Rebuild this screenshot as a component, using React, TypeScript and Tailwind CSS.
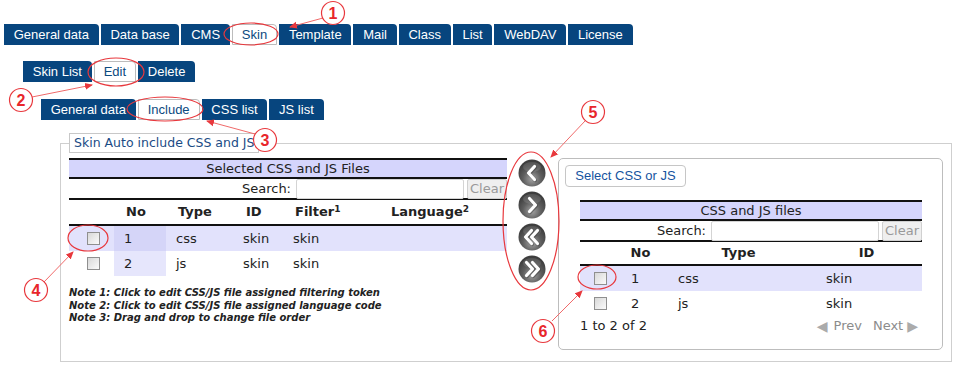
import React from 'react';

const TOP_TABS = ['General data', 'Data base', 'CMS', 'Skin', 'Template', 'Mail', 'Class', 'List', 'WebDAV', 'License'];
const EDIT_TABS = ['Skin List', 'Edit', 'Delete'];
const SUB_TABS = ['General data', 'Include', 'CSS list', 'JS list'];

const VERDANA = "font-['DejaVu_Sans',Verdana,sans-serif]";

function Tab({ label, active }: { label: string; active?: boolean }) {
  return (
    <div
      className={
        active
          ? 'h-[21px] rounded-tr-[4px] border border-[#bcbcbc] bg-white px-[9px] text-[13px] leading-[19px] text-[#0b4a80]'
          : 'h-[21px] rounded-tr-[4px] bg-[#07457e] px-[9.75px] text-[13px] leading-[21px] text-white'
      }
    >
      {label}
    </div>
  );
}

function TabRow({ tabs, active, className }: { tabs: string[]; active: string; className: string }) {
  return (
    <div className={`flex gap-[2px] ${className}`}>
      {tabs.map((t) => (
        <Tab key={t} label={t} active={t === active} />
      ))}
    </div>
  );
}

function Checkbox() {
  return (
    <div className="h-[13px] w-[13px] border border-[#8f8f8f] bg-gradient-to-br from-[#d8d8d8] to-[#fbfbfb]" />
  );
}

function SearchRow() {
  return (
    <div className="flex h-[21px] items-center justify-end gap-[3px] border-b-2 border-[#111]">
      <span className="mr-[2px] text-[13px]">Search:</span>
      <div className="h-[20px] w-[168px] rounded-[2px] border border-[#d4d4d4] bg-white" />
      <div className="h-[20px] w-[40px] rounded-[2px] border border-[#d0d0d0] bg-[#efefef] text-center text-[13px] leading-[18px] text-[#999]">
        Clear
      </div>
    </div>
  );
}

function ArrowButton({ kind }: { kind: 'l' | 'r' | 'll' | 'rr' }) {
  const paths: Record<string, string> = {
    l: 'M16.5 7.5 L10.5 14 L16.5 20.5',
    r: 'M11.5 7.5 L17.5 14 L11.5 20.5',
    ll: 'M13.5 7.5 L7.5 14 L13.5 20.5 M19.5 7.5 L13.5 14 L19.5 20.5',
    rr: 'M8.5 7.5 L14.5 14 L8.5 20.5 M14.5 7.5 L20.5 14 L14.5 20.5',
  };
  return (
    <svg width="28" height="28" viewBox="0 0 28 28">
      <defs>
        <radialGradient id={`g-${kind}`} cx="50%" cy="72%" r="62%">
          <stop offset="0%" stopColor="#a4a4a4" />
          <stop offset="55%" stopColor="#5e5e5e" />
          <stop offset="100%" stopColor="#3e3e3e" />
        </radialGradient>
      </defs>
      <circle cx="14" cy="14" r="13.5" fill={`url(#g-${kind})`} />
      <ellipse cx="14" cy="8" rx="9" ry="5" fill="#ffffff" opacity="0.12" />
      <path d={paths[kind]} fill="none" stroke="#3a3a3a" strokeWidth="3.8" strokeLinecap="round" strokeLinejoin="round" opacity="0.5" transform="translate(0.6 0.8)" />
      <path d={paths[kind]} fill="none" stroke="#ffffff" strokeWidth="3.2" strokeLinecap="round" strokeLinejoin="round" />
    </svg>
  );
}

const LEFT_ROWS = [
  { no: '1', type: 'css', id: 'skin', filter: 'skin' },
  { no: '2', type: 'js', id: 'skin', filter: 'skin' },
];

function LeftTable() {
  const cols = 'grid grid-cols-[45px_52px_70px_48px_97px_1fr]';
  return (
    <div className="w-[438px]">
      <div className="h-[21px] border-y-2 border-[#111] bg-[#d5d5fc] text-center text-[13px] leading-[17px]">
        Selected CSS and JS Files
      </div>
      <SearchRow />
      <div className={`${cols} h-[26px] items-center border-b-2 border-[#111] text-[13px] font-bold`}>
        <div />
        <div className="pl-[12px]">No</div>
        <div className="pl-[12px]">Type</div>
        <div className="pl-[10px]">ID</div>
        <div className="pl-[11px]">
          Filter<sup className="text-[9px]">1</sup>
        </div>
        <div className="pl-[10px]">
          Language<sup className="text-[9px]">2</sup>
        </div>
      </div>
      {LEFT_ROWS.map((r, i) => (
        <div key={r.no} className={`${cols} h-[25px] items-center text-[13px] ${i === 0 ? 'bg-[#e2e2fc]' : 'bg-white'}`}>
          <div className="flex justify-center pl-[3px]">
            <Checkbox />
          </div>
          <div className={`flex h-full items-center pl-[10px] ${i === 0 ? 'bg-[#d5d5f8]' : 'bg-[#e6e6fc]'}`}>{r.no}</div>
          <div className="pl-[10px]">{r.type}</div>
          <div className="pl-[7px]">{r.id}</div>
          <div className="pl-[9px]">{r.filter}</div>
          <div />
        </div>
      ))}
      <div className="mt-[11px] text-[10px] font-bold italic leading-[12.5px]">
        <div>Note 1: Click to edit CSS/JS file assigned filtering token</div>
        <div>Note 2: Click to edit CSS/JS file assigned language code</div>
        <div>Note 3: Drag and drop to change file order</div>
      </div>
    </div>
  );
}

function RightPanel() {
  const cols = 'grid grid-cols-[41px_45px_145px_1fr]';
  return (
    <div className="ml-[12px] w-[385px] rounded-[5px] border border-[#bdbdbd] pb-[13px] pt-[6px]">
      <div className="ml-[6px] h-[22px] w-[121px] rounded-[4px] border border-[#c6c6c6] bg-white text-center font-['Liberation_Sans',Arial,sans-serif] text-[13px] leading-[20px] text-[#1553a0]">
        Select CSS or JS
      </div>
      <div className="ml-[21px] mr-[20px] mt-[13px]">
        <div className="h-[21px] border-y-2 border-[#111] bg-[#d5d5fc] text-center text-[13px] leading-[17px]">
          CSS and JS files
        </div>
        <SearchRow />
        <div className={`${cols} h-[24px] items-center border-b-2 border-[#111] text-center text-[13px] font-bold`}>
          <div />
          <div className="pr-[6px]">No</div>
          <div>Type</div>
          <div>ID</div>
        </div>
        {LEFT_ROWS.map((r, i) => (
          <div key={r.no} className={`${cols} h-[25px] items-center text-[13px] ${i === 0 ? 'bg-[#e2e2fc]' : 'bg-white'}`}>
            <div className="flex justify-center">
              <Checkbox />
            </div>
            <div className="pl-[10px]">{r.no}</div>
            <div className="pl-[12px]">{r.type}</div>
            <div className="pl-[15px]">{r.id}</div>
          </div>
        ))}
        <div className="flex h-[20px] items-center justify-between text-[13px]">
          <span>1 to 2 of 2</span>
          <span className="flex items-center pr-[4px] text-[#8c8c8c]">
            <span className="mr-[6px] text-[14px] leading-[14px] text-[#ababab]">◀</span>
            <span>Prev</span>
            <span className="ml-[11px]">Next</span>
            <span className="ml-[4px] text-[14px] leading-[14px] text-[#ababab]">▶</span>
          </span>
        </div>
      </div>
    </div>
  );
}

function Annotations() {
  const red = '#e8383d';
  const circles: [number, number, string][] = [
    [333, 13, '1'],
    [21, 100, '2'],
    [265, 140, '3'],
    [36, 290, '4'],
    [593, 112, '5'],
    [543, 331, '6'],
  ];
  const lines: [number, number, number, number][] = [
    [323, 18, 290, 27],
    [32, 97, 92, 85],
    [255, 134, 207, 121],
    [44, 282, 73, 252],
    [585, 121, 551, 157],
    [552, 321, 582, 291],
  ];
  const ellipses: [number, number, number, number][] = [
    [251, 34, 27, 11],
    [116, 72, 28, 14],
    [165, 109, 38, 12],
    [88, 238, 20, 13],
    [531, 221, 28, 69],
    [597, 277, 19, 12],
  ];
  return (
    <svg className="pointer-events-none absolute left-0 top-0" width="963" height="372" viewBox="0 0 963 372">
      <defs>
        <marker id="ah" markerWidth="8" markerHeight="8" refX="7" refY="4" orient="auto" markerUnits="userSpaceOnUse">
          <path d="M0 0.5 L8 4 L0 7.5 Z" fill={red} />
        </marker>
      </defs>
      {ellipses.map(([cx, cy, rx, ry], i) => (
        <ellipse key={i} cx={cx} cy={cy} rx={rx} ry={ry} fill="none" stroke={red} strokeWidth="1.2" />
      ))}
      {lines.map(([x1, y1, x2, y2], i) => (
        <line key={i} x1={x1} y1={y1} x2={x2} y2={y2} stroke="#f06a6a" strokeWidth="1" markerEnd="url(#ah)" />
      ))}
      {circles.map(([cx, cy, n]) => (
        <g key={n}>
          <circle cx={cx} cy={cy} r="11.5" fill="#ffffff" stroke={red} strokeWidth="1.2" />
          <text
            x={cx}
            y={cy + 5.5}
            textAnchor="middle"
            fontFamily="'Liberation Sans', Arial, sans-serif"
            fontWeight="bold"
            fontSize="16"
            fill="#e8262b"
          >
            {n}
          </text>
        </g>
      ))}
    </svg>
  );
}

export default function App() {
  return (
    <div className="relative h-[372px] w-[963px] overflow-hidden bg-white font-['Liberation_Sans',Arial,sans-serif] text-[#222]">
      <TabRow tabs={TOP_TABS} active="Skin" className="pl-[4px] pt-[24px]" />
      <TabRow tabs={EDIT_TABS} active="Edit" className="mt-[16px] pl-[23px]" />
      <TabRow tabs={SUB_TABS} active="Include" className="mt-[17px] pl-[41px]" />

      <fieldset className={`ml-[60px] mt-[13px] w-[892px] border border-[#cfcfcf] px-[8px] pb-[11px] pt-[5px] ${VERDANA}`}>
        <legend className="h-[20px] border border-[#c8c8c8] px-[4px] text-[12.5px] leading-[18px] text-[#1a4b85]">
          Skin Auto include CSS and JS
        </legend>
        <div className="flex items-start">
          <LeftTable />
          <div className="ml-[11px] flex w-[28px] flex-col gap-[4px] pt-[1px]">
            <ArrowButton kind="l" />
            <ArrowButton kind="r" />
            <ArrowButton kind="ll" />
            <ArrowButton kind="rr" />
          </div>
          <RightPanel />
        </div>
      </fieldset>

      <Annotations />
    </div>
  );
}
